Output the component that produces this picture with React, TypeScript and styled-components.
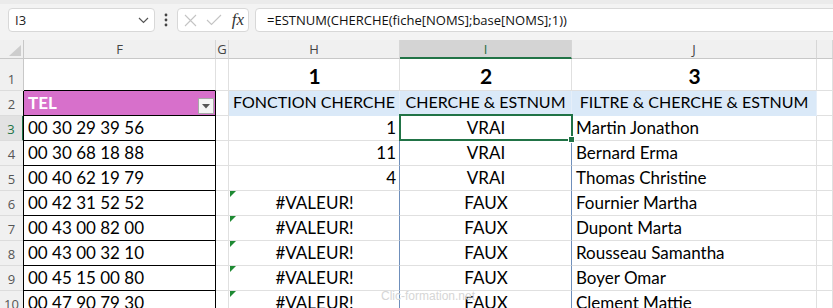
import React from 'react';
import styled, { createGlobalStyle } from 'styled-components';

const Global = createGlobalStyle`
  html, body { margin: 0; padding: 0; background: #fff; }
  body { width: 833px; height: 308px; overflow: hidden; font-family: Lato, "Open Sans", sans-serif; }
`;

const Page = styled.div`
  position: relative;
  width: 833px;
  height: 308px;
  overflow: hidden;
  background: #fff;
`;

const FormulaBar = styled.div`
  box-sizing: border-box;
  height: 40px;
  display: flex;
  align-items: flex-start;
  padding: 4px 0 0 8px;
  background: #f3f3f3;
  border-top: 4px solid #ebebeb;
`;

const Box = styled.div`
  box-sizing: border-box;
  height: 24px;
  background: #fff;
  border: 1px solid #d8d8d8;
  border-radius: 4px;
  display: flex;
  align-items: center;
`;

const NameBox = styled(Box)`
  width: 147px;
  justify-content: space-between;
  padding: 0 5px 0 6px;
  font-family: "Open Sans", sans-serif;
  font-size: 13px;
  color: #222;
`;

const Dots = styled.div`
  width: 22px;
  height: 24px;
  display: flex;
  align-items: center;
  justify-content: center;
`;

const FxBox = styled(Box)`
  width: 72px;
  justify-content: space-between;
  padding: 0 4px 0 6px;
`;

const Fx = styled.span`
  font-family: "Liberation Serif", serif;
  font-style: italic;
  font-size: 17px;
  color: #333;
  line-height: 1;
  margin-top: -2px;
`;

const FormulaInput = styled(Box)`
  flex: 1;
  margin-left: 6px;
  margin-right: -8px;
  padding-left: 11px;
  font-family: "Open Sans", sans-serif;
  font-size: 13px;
  color: #111;
  white-space: nowrap;
`;

const Sheet = styled.div`
  display: grid;
  grid-template-columns: 24px 192px 13px 171px 172px 245px 1fr;
  grid-template-rows: 19px 32px 25px repeat(8, 25px);
`;

const Corner = styled.div`
  box-sizing: border-box;
  background: #f0f0f0;
  border-right: 1px solid #c8c8c8;
  border-bottom: 1px solid #c8c8c8;
  display: flex;
  align-items: flex-end;
  justify-content: flex-end;
  padding: 0 2px 2px 0;
`;

const ColHead = styled.div<{ $active?: boolean }>`
  box-sizing: border-box;
  background: ${p => (p.$active ? '#d4d4d4' : '#f0f0f0')};
  border-right: 1px solid #d6d6d6;
  border-bottom: ${p => (p.$active ? '2px solid #217346' : '1px solid #c8c8c8')};
  display: flex;
  align-items: center;
  justify-content: center;
  font-family: "Open Sans", sans-serif;
  font-size: 13px;
  color: ${p => (p.$active ? '#1e6b41' : '#444')};
  padding-top: ${p => (p.$active ? '1px' : '0')};
`;

const RowHead = styled.div<{ $active?: boolean }>`
  box-sizing: border-box;
  background: ${p => (p.$active ? '#e2e2e2' : '#f0f0f0')};
  border-right: ${p => (p.$active ? '2px solid #217346' : '1px solid #c8c8c8')};
  border-bottom: 1px solid #dcdcdc;
  display: flex;
  align-items: flex-end;
  justify-content: center;
  padding-bottom: 2px;
  font-family: "Open Sans", sans-serif;
  font-size: 13px;
  line-height: 17px;
  color: ${p => (p.$active ? '#217346' : '#555')};
`;

type Align = 'left' | 'center' | 'right';

const Cell = styled.div<{ $align?: Align }>`
  position: relative;
  box-sizing: border-box;
  display: flex;
  align-items: flex-end;
  justify-content: ${p =>
    p.$align === 'center' ? 'center' : p.$align === 'right' ? 'flex-end' : 'flex-start'};
  padding: 0 3px 0 4px;
  border-right: 1px solid #e0e0e0;
  border-bottom: 1px solid #e0e0e0;
  background: #fff;
  font-family: Lato, sans-serif;
  font-size: 17px;
  line-height: 24px;
  color: #000;
  white-space: nowrap;
`;

const TopEdgeCell = styled(Cell)`
  border-bottom-color: #000;
`;

const BigNum = styled(Cell)`
  font-weight: 700;
  font-size: 21px;
  line-height: 25px;
  padding-bottom: 2px;
`;

const TableCell = styled(Cell)`
  border-right-color: #000;
  border-bottom-color: #000;
  box-shadow: -1px 0 0 #000;
`;

const TableHeader = styled(TableCell)`
  background: #d770cb;
  color: #fff;
  font-weight: 700;
  justify-content: space-between;
  align-items: center;
  line-height: 24px;
  padding-right: 1px;
`;

const FilterBtn = styled.div`
  box-sizing: border-box;
  width: 16px;
  height: 16px;
  margin-top: 6px;
  background: #f4f4f4;
  border: 1px solid #a8a8a8;
  display: flex;
  align-items: center;
  justify-content: center;
`;

const BlueHead = styled(Cell)`
  background: #dae9f8;
  border-right-color: #e6eff9;
  border-bottom-color: #dae9f8;
  justify-content: center;
  font-size: 16px;
  padding: 0 0 1px 0;
`;

const ColIValue = styled(Cell)`
  border-right-color: #6f8fbb;
`;

const HValue = styled(Cell)`
  border-right-color: #6f8fbb;
`;

const ErrorMark = styled.span`
  position: absolute;
  top: 0;
  left: 1px;
  width: 0;
  height: 0;
  border-top: 6px solid #1e8a33;
  border-right: 6px solid transparent;
`;

const Selection = styled.div`
  position: absolute;
  top: -2px;
  left: -1px;
  right: -2px;
  bottom: -1px;
  border: 2px solid #217346;
  z-index: 2;
  pointer-events: none;
`;

const FillHandle = styled.div`
  position: absolute;
  right: -4px;
  bottom: -4px;
  width: 5px;
  height: 5px;
  background: #217346;
  border: 1px solid #fff;
`;

const Watermark = styled.div`
  position: absolute;
  left: 381px;
  top: 289px;
  font-family: "Liberation Sans", Arial, sans-serif;
  font-size: 12px;
  color: #d6d6d6;
  z-index: 3;
`;

const rows = [
  { tel: '00 30 29 39 56', h: '1', i: 'VRAI', j: 'Martin Jonathon' },
  { tel: '00 30 68 18 88', h: '11', i: 'VRAI', j: 'Bernard Erma' },
  { tel: '00 40 62 19 79', h: '4', i: 'VRAI', j: 'Thomas Christine' },
  { tel: '00 42 31 52 52', h: '#VALEUR!', i: 'FAUX', j: 'Fournier Martha' },
  { tel: '00 43 00 82 00', h: '#VALEUR!', i: 'FAUX', j: 'Dupont Marta' },
  { tel: '00 43 00 32 10', h: '#VALEUR!', i: 'FAUX', j: 'Rousseau Samantha' },
  { tel: '00 45 15 00 80', h: '#VALEUR!', i: 'FAUX', j: 'Boyer Omar' },
  { tel: '00 47 90 79 30', h: '#VALEUR!', i: 'FAUX', j: 'Clement Mattie' },
];

export default function App() {
  return (
    <Page>
      <Global />
      <FormulaBar>
        <NameBox>
          <span>I3</span>
          <svg width="11" height="7" viewBox="0 0 11 7">
            <path d="M1 1 L5.5 5.5 L10 1" fill="none" stroke="#555" strokeWidth="1.2" />
          </svg>
        </NameBox>
        <Dots>
          <svg width="4" height="14" viewBox="0 0 4 14">
            <circle cx="2" cy="2" r="1.4" fill="#444" />
            <circle cx="2" cy="7" r="1.4" fill="#444" />
            <circle cx="2" cy="12" r="1.4" fill="#444" />
          </svg>
        </Dots>
        <FxBox>
          <svg width="13" height="13" viewBox="0 0 13 13">
            <path d="M1 1 L12 12 M12 1 L1 12" stroke="#c4c4c4" strokeWidth="1.1" />
          </svg>
          <svg width="16" height="12" viewBox="0 0 16 12">
            <path d="M1 6 L5.5 10.5 L15 1" fill="none" stroke="#c4c4c4" strokeWidth="1.1" />
          </svg>
          <Fx>fx</Fx>
        </FxBox>
        <FormulaInput>=ESTNUM(CHERCHE(fiche[NOMS];base[NOMS];1))</FormulaInput>
      </FormulaBar>

      <Sheet>
        <Corner>
          <svg width="12" height="11" viewBox="0 0 12 11">
            <path d="M12 0 L12 11 L0 11 Z" fill="#cdcdcd" />
          </svg>
        </Corner>
        <ColHead>F</ColHead>
        <ColHead>G</ColHead>
        <ColHead>H</ColHead>
        <ColHead $active>I</ColHead>
        <ColHead>J</ColHead>
        <ColHead />

        <RowHead>1</RowHead>
        <TopEdgeCell />
        <Cell />
        <BigNum $align="center">1</BigNum>
        <BigNum $align="center">2</BigNum>
        <BigNum $align="center">3</BigNum>
        <Cell />

        <RowHead>2</RowHead>
        <TableHeader>
          <span>TEL</span>
          <FilterBtn>
            <svg width="8" height="5" viewBox="0 0 8 5">
              <path d="M0 0 L8 0 L4 4.5 Z" fill="#555" />
            </svg>
          </FilterBtn>
        </TableHeader>
        <Cell />
        <BlueHead>FONCTION CHERCHE</BlueHead>
        <BlueHead>CHERCHE &amp; ESTNUM</BlueHead>
        <BlueHead>FILTRE &amp; CHERCHE &amp; ESTNUM</BlueHead>
        <Cell />

        {rows.map((r, idx) => {
          const isErr = r.h.startsWith('#');
          return (
            <React.Fragment key={idx}>
              <RowHead $active={idx === 0}>{idx + 3}</RowHead>
              <TableCell>{r.tel}</TableCell>
              <Cell />
              <HValue $align={isErr ? 'center' : 'right'}>
                {isErr && <ErrorMark />}
                {r.h}
              </HValue>
              <ColIValue $align="center">
                {r.i}
                {idx === 0 && (
                  <Selection>
                    <FillHandle />
                  </Selection>
                )}
              </ColIValue>
              <Cell>{r.j}</Cell>
              <Cell />
            </React.Fragment>
          );
        })}
      </Sheet>
      <Watermark>Clic-formation.net</Watermark>
    </Page>
  );
}
